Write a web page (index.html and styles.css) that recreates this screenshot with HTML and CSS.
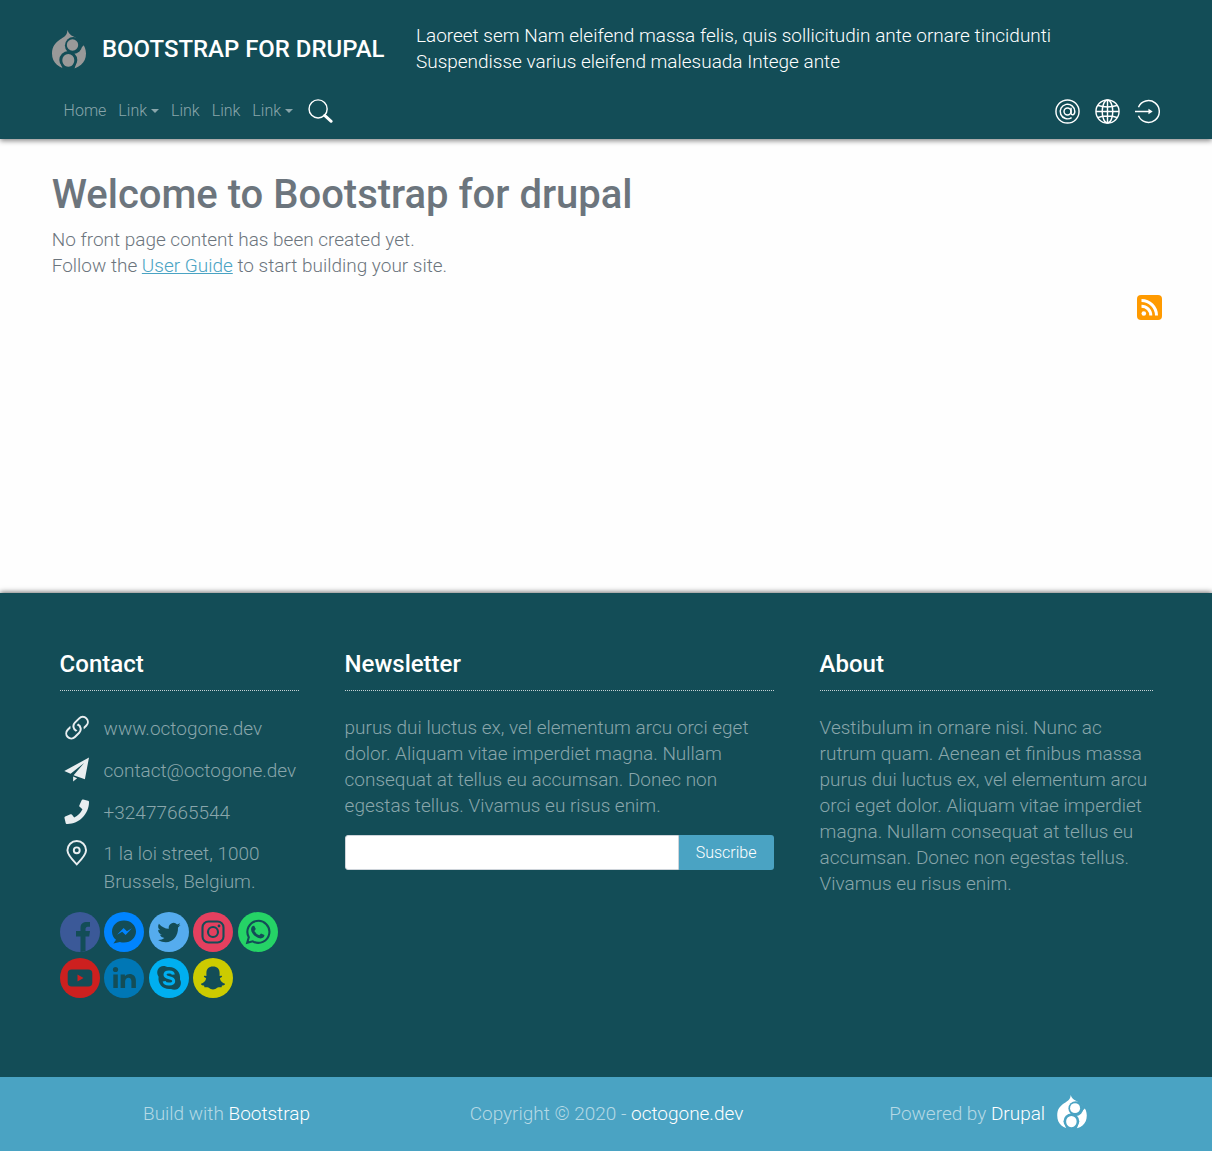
FILE: index.html
```html
<!DOCTYPE html>
<html lang="en">
<head>
<meta charset="utf-8">
<title>Bootstrap for Drupal</title>
<link rel="stylesheet" href="styles.css">
</head>
<body>
<svg class="sprite" width="0" height="0" aria-hidden="true">
  <mask id="drop-cut">
    <rect width="34" height="40" fill="#fff"/>
    <circle cx="21.400" cy="15.500" r="8.500" fill="#000"/>
    <circle cx="16.300" cy="30" r="9" fill="#000"/>
    <path d="M23 8l10 6-5 5zM9 34l2 6h11l2-6z" fill="#000"/>
  </mask>
  <symbol id="drupal" viewBox="0 0 34 40">
    <path d="M15.500 0c1 3.500 3 5 6 6.600C28 10 34 15 34 23.500 34 33 26.500 39 17 39S0 33 0 23.500c0-7 3.500-11 8-14C12.500 6.500 15 5.500 15.500 0z" mask="url(#drop-cut)"/>
    <circle cx="20.500" cy="15" r="5.700"/>
    <path d="M10.300 30a6 6 0 1 1 12 0c0 2.700-1.300 4.800-3 6.100q-3 1.300-6 0c-1.700-1.300-3-3.400-3-6.100z"/>
  </symbol>
</svg>
<header class="header">
  <div class="brand-row">
    <svg class="logo" fill="#999"><use href="#drupal"/></svg>
    <a class="brand">BOOTSTRAP FOR DRUPAL</a>
    <p class="slogan">Laoreet sem Nam eleifend massa felis, quis sollicitudin ante ornare tincidunti<br>Suspendisse varius eleifend malesuada Intege ante</p>
  </div>
  <nav class="nav">
    <a>Home</a><a class="drop">Link</a><a>Link</a><a>Link</a><a class="drop">Link</a>
    <svg class="search" viewBox="0 0 26 26" fill="none" stroke="#fff"><circle cx="10.500" cy="10.300" r="9.400" stroke-width="1.500"/><path d="M17.300 17.100l6.800 6.100" stroke-width="3" stroke-linecap="round"/></svg>
    <div class="tools">
      <svg viewBox="0 0 26 26" fill="none" stroke="#fff" stroke-width="1.500"><circle cx="13" cy="13" r="12"/><circle cx="13" cy="13" r="3.600"/><path d="M16.700 9.200v5.300c0 3 3.900 2.400 3.900-1.500a7.600 7.600 0 1 0-3.300 6.300"/></svg>
      <svg viewBox="0 0 26 26" fill="none" stroke="#fff" stroke-width="1.500"><circle cx="13" cy="13" r="12"/><ellipse cx="13" cy="13" rx="5.500" ry="12"/><path d="M13 1v24M1 13h24M3 6.800q10 3 20 0M3 19.200q10-3 20 0"/></svg>
      <svg viewBox="0 0 26 26" fill="none" stroke="#fff" stroke-width="1.500"><path d="M3.600 8.500a11.300 11.300 0 1 1 0 9M0 13h15"/><path d="M14 10.200l4.400 2.800-4.400 2.800z" fill="#fff" stroke="none"/></svg>
    </div>
  </nav>
</header>
<main class="main">
  <h1>Welcome to Bootstrap for drupal</h1>
  <p>No front page content has been created yet.<br>Follow the <a class="guide">User Guide</a> to start building your site.</p>
  <svg class="feed" viewBox="0 0 25 25"><rect width="25" height="25" rx="4" fill="#ff9a00"/><circle cx="6.800" cy="18.500" r="2.300" fill="#fff"/><path d="M4.500 11.200a9.300 9.300 0 0 1 9.300 9.300M4.500 5.500a15 15 0 0 1 15 15" fill="none" stroke="#fff" stroke-width="3"/></svg>
</main>
<footer class="footer">
  <section class="contact">
    <h2>Contact</h2>
    <ul class="details">
      <li><svg viewBox="1.900 2.100 12.600 12.600" fill="#e9eef0"><path d="M6.354 5.500H4a3 3 0 0 0 0 6h3a3 3 0 0 0 2.830-4H9q-.130 0-.250.031A2 2 0 0 1 7 10.500H4a2 2 0 1 1 0-4h1.535c.218-.376.495-.714.820-1z" transform="rotate(-45 8 8)"/><path d="M9 5.500a3 3 0 0 0-2.830 4h1.098A2 2 0 0 1 9 6.500h3a2 2 0 1 1 0 4h-1.535a4 4 0 0 1-.820 1H12a3 3 0 1 0 0-6z" transform="rotate(-45 8 8)"/></svg><span>www.octogone.dev</span></li>
      <li><svg viewBox="0 0 26 26" fill="#e9eef0"><path d="M25.500.5L.3 14.300l6.400 2.900L20.500 6.200 9.800 18.500l11.500 4.200zM9.300 20v5l4.100-3.300z"/></svg><span>contact@octogone.dev</span></li>
      <li><svg viewBox="0 0 26 26" fill="#e9eef0"><path d="M19.500.6l5 1.100q1 .2 1 1.200C25.500 15.400 15.400 25.500 2.900 25.500q-1 0-1.200-1L.5 19.300q-.2-1 .7-1.400l5.400-2.300q.8-.3 1.400.3l2.400 2.900q5.700-2.700 8.400-8.400L16 8q-.7-.6-.4-1.400l2.400-5.300q.5-1 1.500-.7z"/></svg><span>+32477665544</span></li>
      <li><svg viewBox="0 0 26 26" fill="none" stroke="#e9eef0" stroke-width="2"><path d="M13 24.800C8 19.800 3.500 15 3.500 10.500a9.500 9.500 0 0 1 19 0C22.500 15 18 19.800 13 24.800z"/><circle cx="13" cy="10.500" r="3"/></svg><span>1 la loi street, 1000<br>Brussels, Belgium.</span></li>
    </ul>
    <div class="social">
      <svg viewBox="0 0 40 40"><circle class="fb" cx="20" cy="20" r="20"/><path d="M20.500 40V24.500H16V19h4.500v-3c0-4.800 2.800-6.500 9.500-5.900v4.700c-3-.2-4.500.2-4.500 2.400V19H30l-.8 5.500h-3.700v14.700z"/></svg>
      <svg viewBox="0 0 40 40"><circle class="ms" cx="20" cy="20" r="20"/><path d="M20 8.500c-6.800 0-12 4.800-12 11 0 3.400 1.500 6.300 4 8.300l-2.600 3.700 6.500-1.600c1.300.4 2.700.6 4.100.6 6.800 0 12-4.800 12-11s-5.200-11-12-11z"/><path class="ms" d="M13 22.700l6.600-6.800 3.300 3.400 5-3-6.300 6.700-3.400-3.300z"/></svg>
      <svg viewBox="0 0 40 40"><circle class="tw" cx="20" cy="20" r="20"/><path d="M31.500 13.100l-2.500.7q1.500-.9 2.100-2.500l-3 1.100a4.900 4.900 0 0 0-8.300 4.400q-6-.4-9.900-5.100c-1.400 2.500-.8 5 1.400 6.600l-2.200-.6c0 2.500 1.600 4.300 3.900 4.900l-2.200.1q1.200 2.800 4.600 3.400Q13 28.200 9 28c11.200 6.200 20.500-1.500 20-12.500z"/></svg>
      <svg viewBox="0 0 40 40"><circle class="ig" cx="20" cy="20" r="20"/><g fill="none" stroke="#134d57" stroke-width="2.100"><rect x="9.500" y="9.500" width="21" height="21" rx="6"/><circle cx="20" cy="20" r="5"/></g><circle cx="26" cy="14" r="1.400"/></svg>
      <svg viewBox="0 0 40 40"><circle class="wa" cx="20" cy="20" r="20"/><path d="M9.200 30.800l1.600-5.600a11 11 0 1 1 4 4.100z" fill="none" stroke="#134d57" stroke-width="2.100"/><path d="M16.200 13.700l1.600 3.300-1.400 1.900q1.700 3.200 4.900 4.300l1.700-1.800 3.400 1.700c.2 2.700-3 4-5.700 2.900-4.300-1.500-7.900-5.700-7.600-9 .1-2 1.500-3.700 3.100-3.300z"/></svg>
      <svg viewBox="0 0 40 40"><circle class="yt" cx="20" cy="20" r="20"/><rect x="7.700" y="11.500" width="24.600" height="17" rx="4"/><path class="yt" d="M17.500 16.500v7l6-3.500z"/></svg>
      <svg viewBox="0 0 40 40"><circle class="li" cx="20" cy="20" r="20"/><circle cx="11.500" cy="11.500" r="2.600"/><path d="M9.300 16.400h4.500V30H9.300zM16.600 16.400h4.300v1.800c3-3.700 11-3.200 11 4.500V30h-4.500v-6.700c0-5-6.300-4.500-6.300.2V30h-4.500z"/></svg>
      <svg viewBox="0 0 40 40"><circle class="sk" cx="20" cy="20" r="20"/><path d="M14.500 8c2 0 3 .7 3.800 1.100C26.300 8 32 14 31 21.400c3.200 5.500-2.200 12.700-9 9.600-8 1-13.500-5-12.400-12.200C6.300 13.600 9.500 8 14.500 8z"/><path class="sk-line" d="M24.300 16.600c-.3-3.500-8.300-3.500-8.300.2 0 3.900 8.700 2 8.700 6.200 0 4-8.900 4-9.600.3"/></svg>
      <svg viewBox="0 0 40 40"><circle class="sn" cx="20" cy="20" r="20"/><path d="M20 8.500c4.400 0 6.600 2.700 6.600 6.400v3c.7.400 1.600-.4 2.300.1.900.8-1.500 1.700-2 2.300.2 2.900 2.700 4.900 5.100 5.400.4 1-1.500 1.700-3 1.900l-.5 1.600c-1.500 0-3-.2-4.400.6-1.300 1-2.400 1.700-4.100 1.700s-2.800-.7-4.100-1.700c-1.400-.8-2.900-.6-4.400-.6l-.5-1.600c-1.500-.2-3.400-.9-3-1.900 2.400-.5 4.900-2.500 5.100-5.400-.5-.6-2.900-1.500-2-2.300.7-.5 1.600.3 2.300-.1v-3c0-3.700 2.200-6.400 6.600-6.400z"/></svg>
    </div>
  </section>
  <section class="newsletter">
    <h2>Newsletter</h2>
    <p>purus dui luctus ex, vel elementum arcu orci eget<br>dolor. Aliquam vitae imperdiet magna. Nullam<br>consequat at tellus eu accumsan. Donec non<br>egestas tellus. Vivamus eu risus enim.</p>
    <form class="subscribe"><input type="text" aria-label="Email"><button type="button">Suscribe</button></form>
  </section>
  <section class="about">
    <h2>About</h2>
    <p>Vestibulum in ornare nisi. Nunc ac<br>rutrum quam. Aenean et finibus massa<br>purus dui luctus ex, vel elementum arcu<br>orci eget dolor. Aliquam vitae imperdiet<br>magna. Nullam consequat at tellus eu<br>accumsan. Donec non egestas tellus.<br>Vivamus eu risus enim.</p>
  </section>
</footer>
<div class="credits">
  <span>Build with <a>Bootstrap</a></span>
  <span>Copyright © 2020 - <a>octogone.dev</a></span>
  <span class="powered">Powered by <a>Drupal</a><svg fill="#fff"><use href="#drupal"/></svg></span>
</div>
</body>
</html>
```

FILE: styles.css
```css
* { box-sizing: border-box; }
body { margin: 0; min-height: 1151px; display: flex; flex-direction: column; background: #fefefe; color: #6c757d; font: 300 18.980px/26px Roboto, sans-serif; }
h1, h2, p, ul { margin: 0; padding: 0; }
svg { display: block; flex: none; }
.sprite { position: absolute; }
.header { height: 139px; padding: 22px 50px 0 51.700px; background: #134d57; box-shadow: 0 2px 5px rgba(0,0,0,.45); }
.brand-row { display: flex; height: 54px; color: #fff; }
.logo { width: 34px; height: 40px; margin-top: 7.500px; }
.brand { width: 314.300px; padding-left: 16.300px; font-size: 23.950px; font-weight: 500; line-height: 54px; white-space: nowrap; }
.slogan { padding: 1px 0 0 16px; white-space: nowrap; }
.nav { display: flex; align-items: center; height: 24px; margin: 23px 0 0 11.900px; gap: 12px; color: #89a6ab; font-size: 16px; line-height: 24px; }
.drop { display: flex; align-items: center; }
.drop::after { content: ""; margin-left: 4px; border: 4px solid transparent; border-top-color: currentColor; border-bottom: 0; }
.search { width: 25px; height: 25px; margin-left: 3px; }
.tools { display: flex; gap: 14.600px; margin: 1px 2.500px 0 auto; }
.tools svg { width: 25px; height: 25px; }
.main { height: 454px; padding: 32px 50px 0 51.700px; }
h1 { font-size: 40px; line-height: 48px; font-weight: 500; margin-bottom: 8px; }
.guide { color: #4aa3c3; text-decoration: underline; }
.feed { width: 25px; height: 25px; margin: 16px 0 0 auto; }
.footer { height: 484px; padding: 56px 59.400px 0 59.600px; display: grid; grid-template-columns: 239px 429px 333px; justify-content: space-between; background: #134d57; color: #89a6ab; box-shadow: 0 -1px 5px rgba(0,0,0,.55); }
h2 { height: 42px; margin-bottom: 24px; border-bottom: 1px dotted #c5d2d5; color: #fff; font-size: 24px; line-height: 30px; font-weight: 500; }
.details { list-style: none; }
.details li { display: flex; gap: 14.500px; margin-bottom: 13.800px; line-height: 28px; white-space: nowrap; }
.details svg { width: 25.500px; height: 25.500px; margin-left: 4px; }
.social { display: flex; flex-wrap: wrap; gap: 6px 4.500px; margin-top: 15.700px; fill: #134d57; }
.social svg { width: 40px; height: 40px; }
.fb { fill: #3b5998; }
.ms { fill: #0084ff; }
.tw { fill: #55acee; }
.ig { fill: #e4405f; }
.wa { fill: #25d366; }
.yt { fill: #cd201f; }
.li { fill: #0077b5; }
.sk { fill: #00aff0; }
.sn { fill: #cccb00; }
.sk-line { fill: none; stroke: #00aff0; stroke-width: 3; }
.newsletter p, .about p { white-space: nowrap; }
.subscribe { display: flex; height: 35px; margin-top: 16px; }
.subscribe input { flex: 1; min-width: 0; padding: 0; border: 1px solid #ced4da; border-radius: 3px 0 0 3px; background: #fff; }
.subscribe button { width: 95px; padding: 0; border: 0; border-radius: 0 3px 3px 0; background: #4aa3c3; color: #fff; font: 300 16px/24px Roboto, sans-serif; }
.credits { height: 74px; padding: 0 41px 0 42px; display: grid; grid-template-columns: 369px 391px 370px; align-items: center; justify-items: center; background: #4aa3c3; color: #b5d9e5; }
.credits a { color: #fff; }
.powered { display: flex; align-items: center; white-space: pre; padding-left: 2px; }
.powered svg { width: 30px; height: 35px; margin: -4px 0 0 11.500px; }
```
